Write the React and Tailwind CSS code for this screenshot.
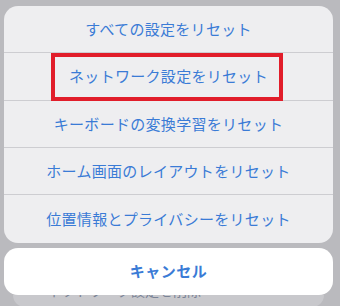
const rows = [
  { label: "すべての設定をリセット", h: "h-[46px]" },
  { label: "ネットワーク設定をリセット", h: "h-[47px]", marked: true },
  { label: "キーボードの変換学習をリセット", h: "h-[46px]" },
  { label: "ホーム画面のレイアウトをリセット", h: "h-[46px]" },
  { label: "位置情報とプライバシーをリセット", h: "h-[48px]" },
]

const App = () => {
  return (
    <div
      className="w-[340px] h-[306px] overflow-hidden bg-[#bababe] pt-[6px] pl-[4px] pr-[7px]"
      style={{ fontFamily: '"Noto Sans CJK JP", "Noto Sans", sans-serif' }}
    >
      <div className="rounded-[14px] bg-[#eeeef0] overflow-hidden">
        {rows.map((row, i) => (
          <div key={row.label}>
            {i > 0 && <div className="h-px bg-[#cdcdd1]" />}
            <div className={`relative ${row.h} flex items-center justify-center`}>
              <span className="text-[15px] text-[#3a7bd6] tracking-[0.3px]">{row.label}</span>
              {row.marked && (
                <div className="absolute left-[47px] top-0 w-[232px] h-[48px] border-[4px] border-[#e11d2a] z-10" />
              )}
            </div>
          </div>
        ))}
      </div>

      <div className="mt-[5px] h-[47px] rounded-[14px] bg-white flex items-center justify-center">
        <span className="text-[15px] font-bold text-[#3a7bd6] tracking-[0.5px]">キャンセル</span>
      </div>

      <div className="mx-[9px] h-[12px] rounded-b-[12px] bg-[#c8c8cc] overflow-hidden">
        <div className="pl-[20px] -mt-[12px] text-[14px] text-[#7a8396] leading-[14px]">
          ・ネットワーク設定を削除
        </div>
      </div>
    </div>
  )
}

export default App
